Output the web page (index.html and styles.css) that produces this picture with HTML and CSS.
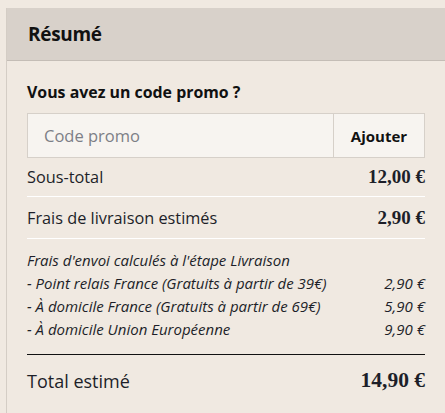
FILE: index.html
```html
<!DOCTYPE html>
<html lang="fr">
<head>
<meta charset="utf-8">
<title>Résumé</title>
<link rel="stylesheet" href="styles.css">
</head>
<body>
<section class="panel">
  <header class="panel-head"><h2>Résumé</h2></header>
  <div class="panel-body">
    <h3 class="promo-title">Vous avez un code promo ?</h3>
    <form class="promo">
      <input class="promo-input" type="text" placeholder="Code promo">
      <button class="promo-btn" type="button">Ajouter</button>
    </form>
    <div class="row row-line row-first">
      <span>Sous-total</span><strong class="price">12,00 €</strong>
    </div>
    <div class="row row-line row-second">
      <span>Frais de livraison estimés</span><strong class="price">2,90 €</strong>
    </div>
    <div class="ship">
      <div class="ship-row"><span>Frais d'envoi calculés à l'étape Livraison</span></div>
      <div class="ship-row"><span>- Point relais France (Gratuits à partir de 39€)</span><span>2,90 €</span></div>
      <div class="ship-row"><span>- À domicile France (Gratuits à partir de 69€)</span><span>5,90 €</span></div>
      <div class="ship-row"><span>- À domicile Union Européenne</span><span>9,90 €</span></div>
    </div>
    <div class="row total">
      <span>Total estimé</span><strong class="price">14,90 €</strong>
    </div>
  </div>
</section>
</body>
</html>
```
FILE: styles.css
```css
html, body {
  margin: 0;
  padding: 0;
  background: #f0e9e1;
  overflow: hidden;
}
body {
  font-family: "Open Sans", sans-serif;
  color: #1d1f29;
}
.panel {
  margin: 8px -2px 0 6px;
  border-left: 1px solid #d4cdc5;
  border-right: 1px solid #d4cdc5;
  background: #f0e9e1;
}
.panel-head {
  background: #d8d1ca;
  border-bottom: 1px solid #c4bdb6;
  height: 52px;
  display: flex;
  align-items: center;
  padding: 0 21px;
}
.panel-head h2 {
  margin: 0;
  font-size: 19px;
  font-weight: 700;
  color: #111;
  letter-spacing: -0.3px;
}
.panel-body {
  padding: 20px 21px 20px 20px;
}
.promo-title {
  margin: 0 0 10px;
  font-size: 15.9px;
  font-weight: 700;
  color: #111;
  line-height: 22px;
}
.promo {
  display: flex;
  box-sizing: border-box;
  height: 45px;
  border: 1px solid #d6d0c9;
  background: #f7f4f0;
  margin: 0;
}
.promo-input {
  flex: 1;
  min-width: 0;
  border: 0;
  background: transparent;
  padding: 0 0 0 16px;
  font-family: "Open Sans", sans-serif;
  font-size: 16.5px;
  color: #333;
  outline: none;
}
.promo-input::placeholder { color: #7d7f86; }
.promo-btn {
  width: 91px;
  border: 0;
  border-left: 1px solid #d6d0c9;
  background: transparent;
  font-family: "Open Sans", sans-serif;
  font-size: 15px;
  font-weight: 700;
  color: #111;
  padding: 0;
}
.row {
  display: flex;
  justify-content: space-between;
  align-items: center;
  font-size: 16.3px;
}
.row-line {
  border-bottom: 1px solid #ffffff;
}
.row-first { height: 38px; }
.row-second { height: 41px; }
.price {
  font-family: "Liberation Serif", serif;
  font-weight: 700;
  font-size: 19px;
}
.ship {
  padding: 10px 0 13px;
  border-bottom: 1px solid #111;
  font-style: italic;
  font-size: 15px;
}
.ship-row {
  display: flex;
  justify-content: space-between;
  line-height: 23px;
}
.total {
  height: 51px;
  font-size: 18px;
}
.total .price { font-size: 21.5px; }
```
